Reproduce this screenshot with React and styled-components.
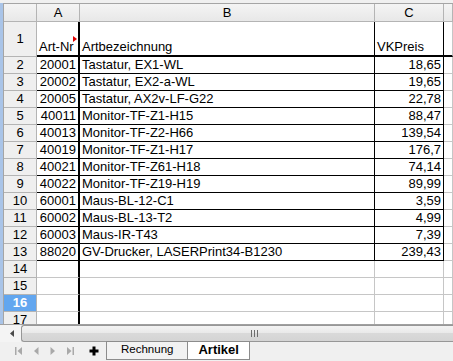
import React from "react";
import styled, { createGlobalStyle } from "styled-components";

const GlobalStyle = createGlobalStyle`
  html, body { margin: 0; padding: 0; background: #f0f0f0; }
  body { font-family: "Liberation Sans", Arial, sans-serif; }
  * { box-sizing: border-box; }
`;

const Window = styled.div`
  width: 453px;
  height: 361px;
  background: #f0f0f0;
  overflow: hidden;
  display: flex;
  flex-direction: column;
  padding-top: 3px;
  font-family: "Liberation Sans", Arial, sans-serif;
  font-size: 13px;
  color: #000;
`;

const SheetFrame = styled.div`
  height: 321px;
  border-left: 3px solid #a9c4e8;
  flex-shrink: 0;
`;

const Sheet = styled.div`
  height: 321px;
  overflow: hidden;
  border-top: 1px solid #a5a5a5;
  border-left: 1px solid #a5a5a5;
  display: grid;
  grid-template-columns: 33px 43px 295px 69px 1fr;
  grid-auto-rows: 17px;
  grid-template-rows: 18px 35px;
  background: #fff;
`;

const ColHead = styled.div`
  background: linear-gradient(#f4f4f4, #e8e8e8);
  border-right: 1px solid #b4b4b4;
  border-bottom: 1px solid #b4b4b4;
  display: flex;
  align-items: center;
  justify-content: center;
  line-height: 17px;
`;

const Corner = styled(ColHead)``;

const RowHead = styled.div`
  background: ${(p) => (p.$selected ? "#62a6ef" : "#efefef")};
  color: ${(p) => (p.$selected ? "#fff" : "#000")};
  font-weight: ${(p) => (p.$selected ? "bold" : "normal")};
  border-right: 1px solid #b4b4b4;
  border-bottom: 1px solid #b4b4b4;
  display: flex;
  align-items: center;
  justify-content: center;
  line-height: 16px;
`;

const Cell = styled.div`
  position: relative;
  background: #fff;
  white-space: nowrap;
  overflow: hidden;
  display: flex;
  align-items: flex-end;
  justify-content: ${(p) => (p.$num ? "flex-end" : "flex-start")};
  padding: 0 2px;
  line-height: 16px;
  border-right: ${(p) =>
    p.$freeze ? "2px solid #000" : `1px solid ${p.$boxed ? "#000" : "#c6c6c6"}`};
  border-bottom: ${(p) =>
    p.$thick ? "2px solid #000" : `1px solid ${p.$boxed ? "#000" : "#c6c6c6"}`};
`;

const ClipMark = styled.span`
  position: absolute;
  right: 1px;
  top: 14px;
  width: 0;
  height: 0;
  border-left: 4px solid #e00000;
  border-top: 3px solid transparent;
  border-bottom: 3px solid transparent;
`;

const HScroll = styled.div`
  height: 18px;
  flex-shrink: 0;
  display: flex;
  overflow: hidden;
  border-top: 1px solid #a0a0a0;
  background: #f4f4f4;
`;

const ScrollArrow = styled.div`
  width: 21px;
  flex-shrink: 0;
  display: flex;
  align-items: center;
  justify-content: center;
  padding-left: 3px;
`;

const Thumb = styled.div`
  width: 465px;
  flex-shrink: 0;
  border: 1px solid #979797;
  border-right: none;
  border-radius: 3px 0 0 3px;
  background: linear-gradient(#f3f3f3 0%, #e9e9e9 45%, #d9d9d9 50%, #d4d4d4 100%);
  display: flex;
  align-items: center;
  justify-content: center;
`;

const TabBar = styled.div`
  flex: 1;
  display: flex;
  align-items: flex-start;
  background: #f0f0f0;
`;

const NavGroup = styled.div`
  display: flex;
  align-items: center;
  height: 18px;
  padding-left: 15px;
  gap: 9px;
  width: 106px;
  flex-shrink: 0;
`;

const NavBtn = styled.span`
  width: 8px;
  height: 10px;
  display: flex;
  align-items: center;
  justify-content: center;
`;

const AddBtn = styled.span`
  width: 10px;
  height: 10px;
  display: flex;
  margin-left: 6px;
`;

const Tab = styled.div`
  margin-top: -1px;
  height: 19px;
  padding: 0 ${(p) => p.$pad}px;
  border: 1px solid #8c8c8c;
  border-left: ${(p) => (p.$first ? "1px solid #8c8c8c" : "none")};
  background: ${(p) => (p.$active ? "#fff" : "#f2f2f2")};
  font-weight: ${(p) => (p.$active ? "bold" : "normal")};
  font-size: ${(p) => p.$size}px;
  line-height: 15px;
  white-space: nowrap;
`;

const rows = [
  ["20001", "Tastatur, EX1-WL", "18,65"],
  ["20002", "Tastatur, EX2-a-WL", "19,65"],
  ["20005", "Tastatur, AX2v-LF-G22", "22,78"],
  ["40011", "Monitor-TF-Z1-H15", "88,47"],
  ["40013", "Monitor-TF-Z2-H66", "139,54"],
  ["40019", "Monitor-TF-Z1-H17", "176,7"],
  ["40021", "Monitor-TF-Z61-H18", "74,14"],
  ["40022", "Monitor-TF-Z19-H19", "89,99"],
  ["60001", "Maus-BL-12-C1", "3,59"],
  ["60002", "Maus-BL-13-T2", "4,99"],
  ["60003", "Maus-IR-T43", "7,39"],
  ["88020", "GV-Drucker, LASERPrint34-B1230", "239,43"],
];

const Tri = ({ dir = "left", bar }) => (
  <svg width="8" height="10" viewBox="0 0 8 10">
    {dir === "left" ? (
      <>
        {bar && <rect x="0" y="1" width="1.5" height="8" fill="#a9a9a9" />}
        <polygon points={bar ? "7,1 7,9 2.5,5" : "6.5,1 6.5,9 2,5"} fill="#a9a9a9" />
      </>
    ) : (
      <>
        <polygon points={bar ? "1,1 1,9 5.5,5" : "1.5,1 1.5,9 6,5"} fill="#a9a9a9" />
        {bar && <rect x="6.5" y="1" width="1.5" height="8" fill="#a9a9a9" />}
      </>
    )}
  </svg>
);

export default function App() {
  return (
    <>
      <GlobalStyle />
      <Window>
        <SheetFrame>
          <Sheet>
            <Corner />
            <ColHead>A</ColHead>
            <ColHead>B</ColHead>
            <ColHead>C</ColHead>
            <ColHead />

            <RowHead>1</RowHead>
            <Cell $boxed $freeze $thick>
              Art-Nr
              <ClipMark />
            </Cell>
            <Cell $boxed $thick>Artbezeichnung</Cell>
            <Cell $boxed $thick>VKPreis</Cell>
            <Cell $thick />

            {rows.map(([nr, name, price], i) => (
              <React.Fragment key={nr}>
                <RowHead>{i + 2}</RowHead>
                <Cell $boxed $freeze $num>{nr}</Cell>
                <Cell $boxed>{name}</Cell>
                <Cell $boxed $num>{price}</Cell>
                <Cell />
              </React.Fragment>
            ))}

            {[14, 15, 16, 17].map((n) => (
              <React.Fragment key={n}>
                <RowHead $selected={n === 16}>{n}</RowHead>
                <Cell $freeze />
                <Cell />
                <Cell />
                <Cell />
              </React.Fragment>
            ))}
          </Sheet>
        </SheetFrame>

        <HScroll>
          <ScrollArrow>
            <svg width="4" height="7" viewBox="0 0 4 7">
              <polygon points="4,0 4,7 0,3.5" fill="#4a4a4a" />
            </svg>
          </ScrollArrow>
          <Thumb>
            <svg width="7" height="7" viewBox="0 0 7 7">
              <rect x="0" y="0" width="1" height="7" fill="#6e6e6e" />
              <rect x="3" y="0" width="1" height="7" fill="#6e6e6e" />
              <rect x="6" y="0" width="1" height="7" fill="#6e6e6e" />
            </svg>
          </Thumb>
        </HScroll>

        <TabBar>
          <NavGroup>
            <NavBtn><Tri dir="left" bar /></NavBtn>
            <NavBtn><Tri dir="left" /></NavBtn>
            <NavBtn><Tri dir="right" /></NavBtn>
            <NavBtn><Tri dir="right" bar /></NavBtn>
            <AddBtn>
              <svg width="10" height="10" viewBox="0 0 10 10">
                <rect x="3.5" y="0.5" width="3" height="9" fill="#000" />
                <rect x="0.5" y="3.5" width="9" height="3" fill="#000" />
              </svg>
            </AddBtn>
          </NavGroup>
          <Tab $first $pad={14} $size={11.5}>Rechnung</Tab>
          <Tab $active $pad={10} $size={13}>Artikel</Tab>
        </TabBar>
      </Window>
    </>
  );
}
